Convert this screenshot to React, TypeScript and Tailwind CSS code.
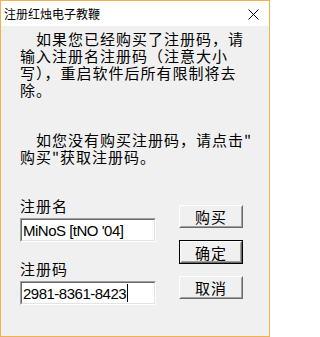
import React from 'react';

const cjk = 'font-[family-name:Noto_Sans_CJK_SC,Noto_Sans,sans-serif]';

const WinButton = ({ label, isDefault = false }: { label: string; isDefault?: boolean }) => (
  <div className={isDefault ? 'border border-black' : ''}>
    <div className="border border-t-white border-l-white border-b-[#696969] border-r-[#696969]">
      <div
        className={`flex items-center justify-center border border-t-[#f0f0f0] border-l-[#f0f0f0] border-b-[#a0a0a0] border-r-[#a0a0a0] bg-[#f0f0f0] text-[15px] leading-none tracking-[1px] text-black ${cjk} ${
          isDefault ? 'h-[20px]' : 'h-[21px]'
        }`}
      >
        {label}
      </div>
    </div>
  </div>
);

const WinInput = ({ value, caret = false }: { value: string; caret?: boolean }) => (
  <div className="border border-t-[#a0a0a0] border-l-[#a0a0a0] border-b-white border-r-white">
    <div className="flex h-[22px] items-center border border-t-[#696969] border-l-[#696969] border-b-[#e3e3e3] border-r-[#e3e3e3] bg-white pl-[1px] text-black">
      <span className="font-[family-name:Liberation_Sans,Arial,sans-serif] text-[15px] leading-none tracking-[-0.5px]">
        {value}
      </span>
      {caret && <span className="ml-[1px] inline-block h-[18px] w-[1px] bg-black" />}
    </div>
  </div>
);

export default function App() {
  return (
    <div className="box-border flex h-[337px] w-[270px] flex-col border border-[#f0b24f] bg-[#f0f0f0]">
      {/* title bar */}
      <div className="flex h-[25px] shrink-0 items-center justify-between bg-white pl-[3px] pr-[10px]">
        <span className={`text-[12px] leading-none text-black ${cjk}`}>注册红烛电子教鞭</span>
        <svg width="11" height="11" viewBox="0 0 11 11" className="mt-[1px]">
          <path d="M0.5 0.5 L10.5 10.5 M10.5 0.5 L0.5 10.5" stroke="#000" strokeWidth="1" fill="none" />
        </svg>
      </div>

      {/* body */}
      <div className={`flex flex-col pl-[19px] pt-[4px] text-[15px] leading-[17px] tracking-[1px] text-black ${cjk}`}>
        <p className="indent-4">
          如果您已经购买了注册码，请
          <br />
          输入注册名注册码（注意大小
          <br />
          写），重启软件后所有限制将去
          <br />
          除。
        </p>

        <p className="mt-[33px] indent-4">
          如您没有购买注册码，请点击"
          <br />
          购买"获取注册码。
        </p>

        <div className="mt-[32px] flex items-start">
          <div className="flex w-[136px] flex-col">
            <span className="h-[21px]">注册名</span>
            <WinInput value="MiNoS [tNO '04]" />
            <span className="mt-[18px] h-[21px]">注册码</span>
            <WinInput value="2981-8361-8423" caret />
          </div>
          <div className="ml-[23px] mt-[8px] flex w-[64px] flex-col gap-[12px]">
            <WinButton label="购买" />
            <WinButton label="确定" isDefault />
            <WinButton label="取消" />
          </div>
        </div>
      </div>
    </div>
  );
}
